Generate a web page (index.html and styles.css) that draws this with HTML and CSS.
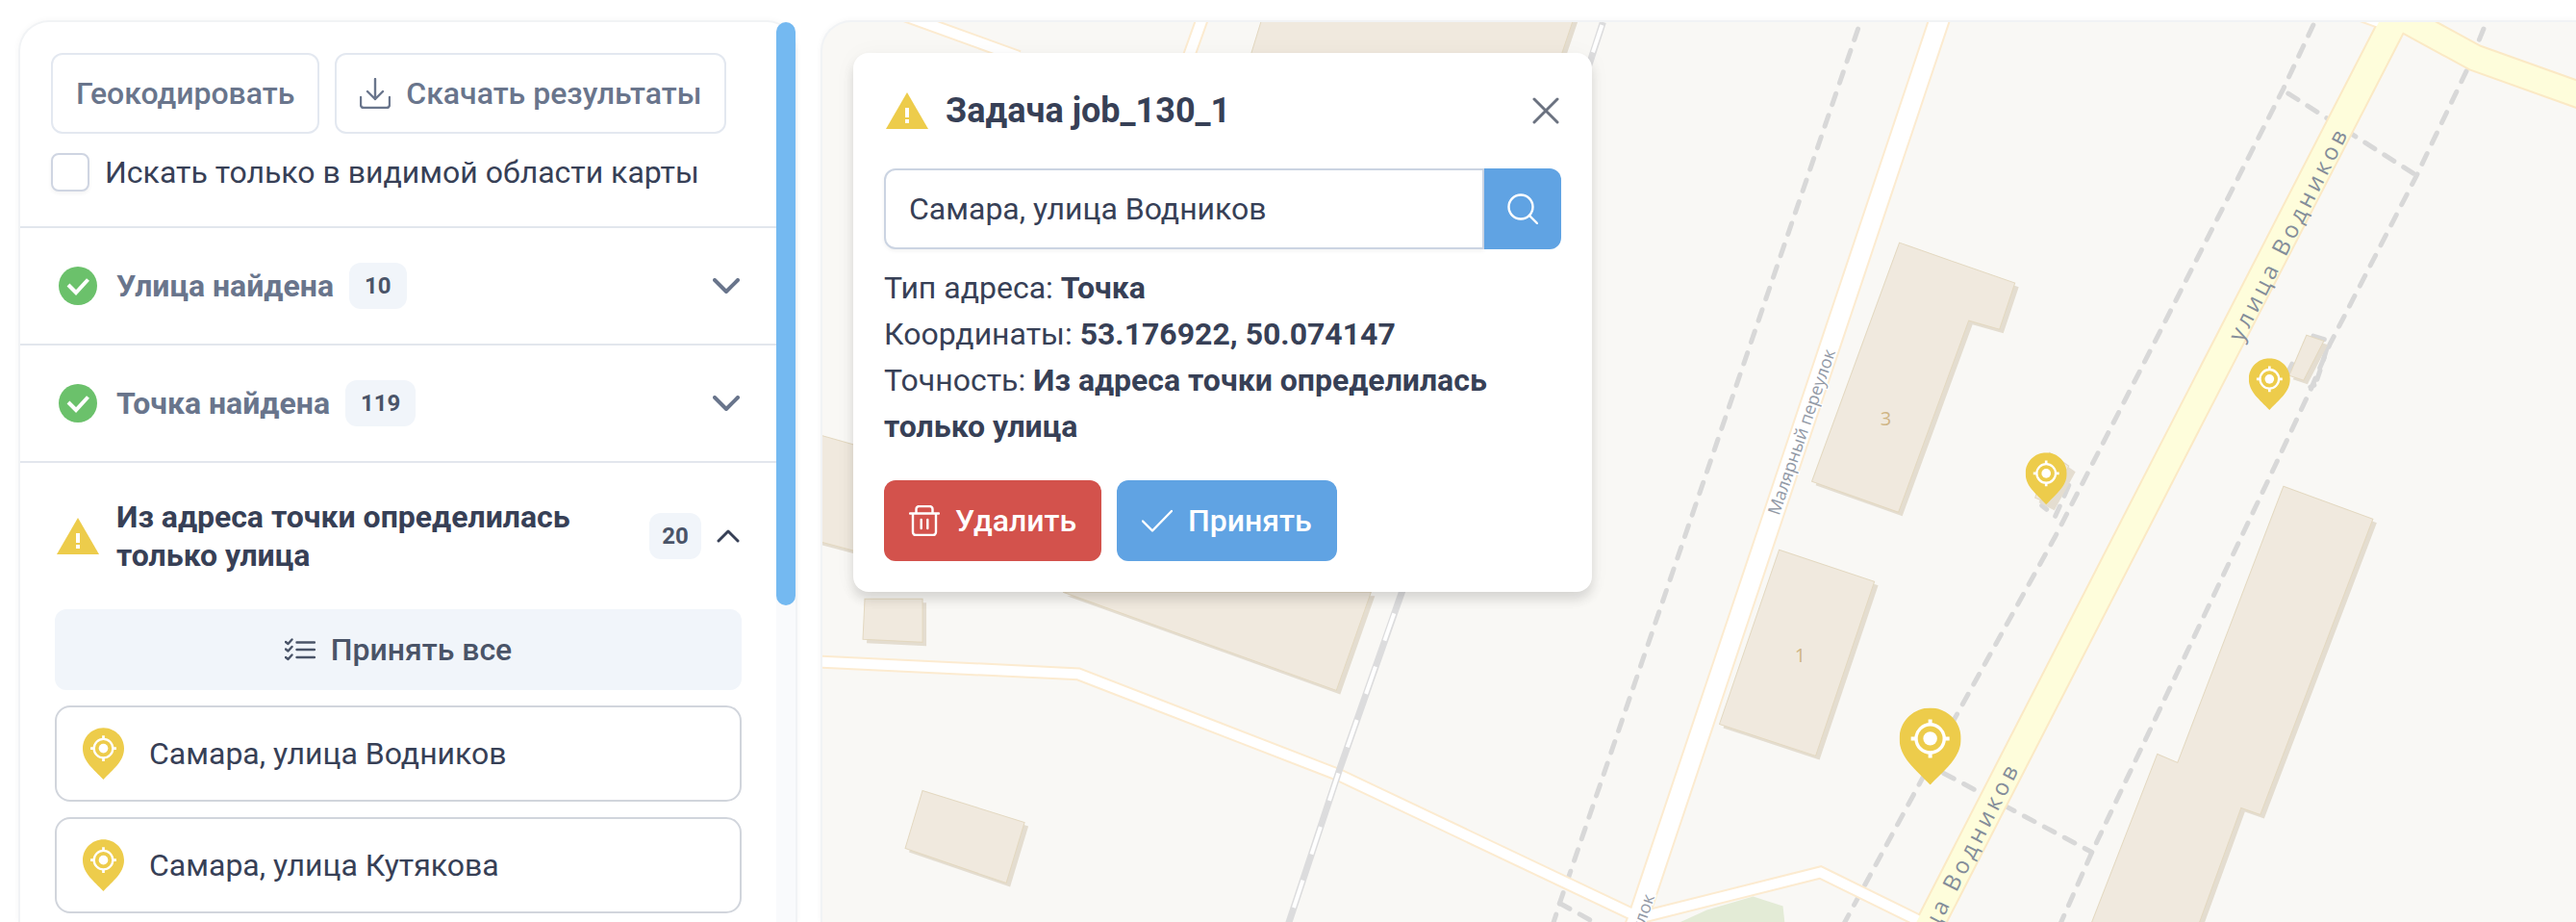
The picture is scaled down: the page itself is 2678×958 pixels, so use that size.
FILE: index.html
```html
<!DOCTYPE html>
<html lang="ru">
<head>
  <meta charset="UTF-8" />
  <title>Геокодирование</title>
  <link rel="stylesheet" href="styles.css">
</head>
<body>

  <!-- Общие иконки -->
  <svg class="sprite" aria-hidden="true">
    <symbol id="pin" viewBox="0 0 64 80">
      <path fill="#edcc4b" d="M32 0C14.300 0 0 14.300 0 32c0 20 17 32 32 48 15-16 32-28 32-48C64 14.300 49.700 0 32 0z" />
      <g fill="none" stroke="#fff">
        <circle cx="32" cy="32" r="14.600" stroke-width="3.400" />
        <path stroke-width="4" d="M32 12v5M32 47v5M12 32h5M47 32h5" />
      </g>
      <circle cx="32" cy="32" r="7.200" fill="#fff" />
    </symbol>
    <symbol id="warning" viewBox="0 0 44 38">
      <path fill="#edcc4b" d="M22 0l22 38H0z" />
      <path fill="#fff" d="M20 16h4v10h-4zM20 28h4v4h-4z" />
    </symbol>
    <symbol id="success" viewBox="0 0 40 40">
      <circle cx="20" cy="20" r="20" fill="#6bc16b" />
      <path fill="none" stroke="#fff" stroke-width="4" d="M10 19l8 8 12.500-13.500" />
    </symbol>
  </svg>

  <aside class="panel sidebar">
    <div class="sidebar-content">
      <div class="toolbar">
        <div class="row">
          <button type="button" class="btn btn-outline">Геокодировать</button>
          <button type="button" class="btn btn-outline">
            <svg class="icon" viewBox="0 0 32 32"><path d="M16 1v21M8 14l8 8 8-8M1 20v8a3 3 0 0 0 3 3h24a3 3 0 0 0 3-3v-8" /></svg>
            Скачать результаты
          </button>
        </div>
        <label class="check" for="visibleOnly">
          <input type="checkbox" id="visibleOnly" />
          Искать только в видимой области карты
        </label>
      </div>

      <button type="button" class="group" aria-expanded="false">
        <svg class="status"><use href="#success" /></svg>
        <span>Улица найдена</span>
        <span class="badge">10</span>
        <svg class="chevron" viewBox="0 0 28 16"><path d="M2 2l12 12L26 2" /></svg>
      </button>

      <button type="button" class="group" aria-expanded="false">
        <svg class="status"><use href="#success" /></svg>
        <span>Точка найдена</span>
        <span class="badge">119</span>
        <svg class="chevron" viewBox="0 0 28 16"><path d="M2 2l12 12L26 2" /></svg>
      </button>

      <button type="button" class="group open" aria-expanded="true">
        <svg class="status"><use href="#warning" /></svg>
        <span class="group-title">Из адреса точки определилась только улица</span>
        <span class="badge">20</span>
        <svg class="chevron" viewBox="0 0 24 14"><path d="M2 12L12 2l10 10" /></svg>
      </button>

      <div class="group-body">
        <button type="button" class="btn btn-muted">
          <svg class="icon list-icon" viewBox="0 0 32 24"><path d="M12.500 4.500H31M12.500 12H31M12.500 20H31M1 4l2.500 2L7.500 1.500M1 11.500l2.500 2 4-4.500M1 20l2.500 2 4-4.500" /></svg>
          Принять все
        </button>
        <button type="button" class="address"><svg class="pin"><use href="#pin" /></svg>Самара, улица Водников</button>
        <button type="button" class="address"><svg class="pin"><use href="#pin" /></svg>Самара, улица Кутякова</button>
      </div>
    </div>
    <div class="scrollbar"><div class="thumb"></div></div>
  </aside>

  <main class="panel map">
    <svg class="map-canvas" viewBox="856 23 1822 935" preserveAspectRatio="xMinYMin slice" aria-label="Карта">
      <path fill="#e3ebd6" d="M1742 960l33-15 48-14 31 10 2 19z" />

      <!-- Пешеходные дорожки -->
      <g class="footpath">
        <path d="M1932 30L1622 938l-7 22" />
        <path d="M1622 938l40 22" />
        <path d="M2405 26l-31 66-126 248-111 217-105 190-115 213" />
        <path d="M2379 97l133 85" />
        <path d="M2582 30l-17 42-53 111-90 175-19 45-36 77-133 281-59 124-33 75" />
        <path d="M2021 803l154 82" />
        <path d="M2405 349l13 4M2419 362l-6 20-4 12M2383 378l-5 10M2402 402l4-2" />
        <path d="M2151 504l-6 14-8 18M2123 525l5 4" />
      </g>

      <!-- Здания: сначала тень, потом контур -->
      <g id="buildings">
        <g class="building-shade" transform="translate(4 4)">
          <path d="M1314 15h324l-22 65h-322z" />
          <path d="M1106 615l284 102 36-102z" />
          <path d="M840 448l60 17v110l-60-16z" />
          <path d="M900 622h60v45l-62-3z" />
          <path d="M960 821l106 33-19 63-105-36z" />
          <path d="M1975 252l120 42-16 48-32-9-73 199-90-32z" />
          <path d="M1850 571l99 33-61 181-100-33z" />
          <path d="M2374 505l93 34-117 307-20-7-44 121h-112l69-177 21 9z" />
          <path d="M2398 348l18 6-21 41-15-5z" />
          <path d="M2131 470l23 16-22 40-16-8z" />
        </g>
        <g class="building">
          <path d="M1314 15h324l-22 65h-322z" />
          <path d="M1106 615l284 102 36-102z" />
          <path d="M840 448l60 17v110l-60-16z" />
          <path d="M900 622h60v45l-62-3z" />
          <path d="M960 821l106 33-19 63-105-36z" />
          <path d="M1975 252l120 42-16 48-32-9-73 199-90-32z" />
          <path d="M1850 571l99 33-61 181-100-33z" />
          <path d="M2374 505l93 34-117 307-20-7-44 121h-112l69-177 21 9z" />
          <path d="M2398 348l18 6-21 41-15-5z" />
          <path d="M2131 470l20 14-22 38-13-5z" />
        </g>
      </g>

      <!-- Дороги: обводка и заливка -->
      <g class="road-case">
        <path stroke-width="14" d="M850 687l272 13 271 105 312 148 188-47 110 54M930 12l130 47M1254 10l-25 70M2430 7l60 22" />
        <path stroke-width="23" d="M2020 10L1703 955l-8 20" />
        <path class="yellow-case" stroke-width="31" d="M2000 973L2253 480 2496 8" />
        <path class="yellow-case" stroke-width="29" d="M2485 12l88 48 115 41" />
      </g>
      <g class="road">
        <path stroke-width="10" d="M850 687l272 13 271 105 312 148 188-47 110 54M930 12l130 47M1254 10l-25 70M2430 7l60 22" />
        <path stroke-width="19" d="M2020 10L1703 955l-8 20" />
        <path class="yellow" stroke-width="27" d="M2000 973L2253 480 2496 8" />
        <path class="yellow" stroke-width="25" d="M2485 12l88 48 115 41" />
      </g>

      <!-- Железная дорога -->
      <path class="rail" d="M1667 23l-13 40-196 552-65 185-55 166" />
      <path class="rail-gap" d="M1666 26l-14 42" stroke-dasharray="30 60" />
      <path class="rail-gap" d="M1450 637l-57 163-55 166" stroke-dasharray="30 28.600" />

      <g class="street">
        <text transform="translate(2331 356) rotate(-63)">улица Водников</text>
        <text transform="translate(1989 1016) rotate(-63)">улица Водников</text>
      </g>
      <g class="lane">
        <text transform="translate(1850 536) rotate(-71)">Малярный переулок</text>
        <text transform="translate(1662 1102) rotate(-71)">Малярный переулок</text>
      </g>
      <text class="house" x="1961" y="442">3</text>
      <text class="house" x="1872" y="688">1</text>

      <use href="#pin" x="2338" y="372" width="43" height="54" />
      <use href="#pin" x="2106" y="470" width="43" height="54" />
      <use href="#pin" x="1975" y="735" width="64" height="80" />
    </svg>

    <section class="popup">
      <header class="popup-header">
        <svg class="status"><use href="#warning" /></svg>
        <h2>Задача job_130_1</h2>
        <button type="button" class="close" aria-label="Закрыть">
          <svg viewBox="0 0 28 28"><path d="M2 2l24 24M26 2L2 26" /></svg>
        </button>
      </header>

      <form class="search" onsubmit="event.preventDefault();">
        <input type="text" aria-label="Адрес" value="Самара, улица Водников" />
        <button type="submit" aria-label="Найти">
          <svg class="icon" viewBox="0 0 32 32"><circle cx="14" cy="14" r="12.500" /><path d="M23 23l8 8" /></svg>
        </button>
      </form>

      <div class="details">
        <div>Тип адреса: <strong>Точка</strong></div>
        <div>Координаты: <strong>53.176922, 50.074147</strong></div>
        <div>Точность: <strong>Из адреса точки определилась только улица</strong></div>
      </div>

      <div class="row">
        <button type="button" class="btn btn-danger">
          <svg class="icon" viewBox="0 0 32 32"><path d="M1 8.500h30M7.500 8V4a3 3 0 0 1 3-3h11a3 3 0 0 1 3 3v4M4 9v19a3 3 0 0 0 3 3h18a3 3 0 0 0 3-3V9M12.700 15v9M19.300 15v9" /></svg>
          Удалить
        </button>
        <button type="button" class="btn btn-primary">
          <svg class="icon" viewBox="0 0 32 32"><path d="M1 16.500l10 10L31 6" /></svg>
          Принять
        </button>
      </div>
    </section>
  </main>

</body>
</html>
```
FILE: styles.css
```css
* {
  box-sizing: border-box;
}
body {
  margin: 0;
  padding: 21px 0 0 19px;
  height: 100vh;
  overflow: hidden;
  display: flex;
  gap: 24px;
  background: #fff;
  color: #374056;
  font-family: Roboto, "Liberation Sans", sans-serif;
  font-size: 32px;
}
button, input {
  font: inherit;
  color: inherit;
}
button {
  cursor: pointer;
}
.sprite {
  position: absolute;
  width: 0;
  height: 0;
}

/* Панели */
.panel {
  border: 2px solid #f1f3f5;
  border-bottom: none;
  border-radius: 32px 32px 0 0;
  box-shadow: 0 0 6px rgba(0, 0, 0, 0.04);
}
.sidebar {
  flex: 0 0 810px;
  display: flex;
}
.sidebar-content {
  flex: 1;
  overflow: hidden;
  border-top-left-radius: 30px;
}
.scrollbar {
  width: 20px;
  background: #f9fafc;
  border-radius: 10px 10px 0 0;
}
.thumb {
  height: 64.8%;
  border-radius: 10px;
  background: #74b9f1;
}

/* Кнопки */
.row {
  display: flex;
  gap: 16px;
}
.btn {
  display: flex;
  align-items: center;
  justify-content: center;
  gap: 16px;
  height: 84px;
  padding: 0 24px;
  border: 2px solid transparent;
  border-radius: 12px;
  font-weight: 500;
  white-space: nowrap;
}
.btn-outline {
  background: #fff;
  border-color: #e3e8f0;
  color: #69758c;
}
.btn-muted {
  background: #f1f5fa;
  color: #4a5468;
}
.btn-danger {
  background: #d3524c;
  color: #fff;
}
.btn-primary {
  background: #60a3e3;
  color: #fff;
}
.icon {
  width: 32px;
  height: 32px;
  fill: none;
  stroke: currentColor;
  stroke-width: 2.4;
  stroke-linecap: round;
  stroke-linejoin: round;
}
.list-icon {
  height: 24px;
}

/* Верх боковой панели */
.toolbar {
  display: flex;
  flex-direction: column;
  gap: 20px;
  padding: 32px 32px 36px;
}
.check {
  display: flex;
  align-items: center;
  gap: 16px;
  height: 40px;
}
.check input {
  appearance: none;
  width: 40px;
  height: 40px;
  margin: 0;
  border: 2px solid #cfd5e2;
  border-radius: 8px;
  background: #fff;
  box-shadow: 0 2px 4px rgba(18, 18, 23, 0.05);
}

/* Группы результатов */
.group {
  display: flex;
  align-items: center;
  gap: 16px;
  width: 100%;
  min-height: 122px;
  padding: 36px 38px 36px 36px;
  border: none;
  border-top: 2px solid #e2e6ed;
  background: #fff;
  color: #69758c;
  font-weight: 700;
  line-height: 40px;
  text-align: left;
}
.group.open {
  color: #374056;
}
.group-title {
  flex: 1;
}
.status {
  flex: none;
  width: 48px;
  height: 40px;
}
.open .status,
.popup-header .status {
  height: 38px;
}
.badge {
  min-width: 54px;
  height: 48px;
  padding: 0 16px;
  border-radius: 12px;
  background: #f1f5fa;
  color: #4a5468;
  font-size: 24px;
  line-height: 48px;
  text-align: center;
}
.open .badge {
  padding: 0 12px;
}
.chevron {
  flex: none;
  width: 28px;
  height: 16px;
  margin-left: auto;
  fill: none;
  stroke: currentColor;
  stroke-width: 4;
  stroke-linecap: round;
  stroke-linejoin: round;
}
.open .chevron {
  width: 24px;
  height: 14px;
  margin-left: 0;
  stroke-width: 3;
}
.group-body {
  display: flex;
  flex-direction: column;
  gap: 16px;
  padding: 0 36px;
}
.address {
  display: flex;
  align-items: center;
  gap: 26px;
  height: 100px;
  padding: 0 27px;
  border: 2px solid #d1d5dc;
  border-radius: 16px;
  background: #fff;
  text-align: left;
}
.pin {
  width: 43px;
  height: 54px;
}

/* Карта */
.map {
  flex: 1;
  position: relative;
  overflow: hidden;
  border-right: none;
  border-top-right-radius: 0;
  background: #f9f8f5;
}
.map-canvas {
  position: absolute;
  inset: 0;
  width: 100%;
  height: 100%;
}
.footpath {
  fill: none;
  stroke: #d8d8d8;
  stroke-width: 5;
  stroke-linecap: round;
  stroke-dasharray: 12 11.7;
}
.building {
  fill: #f0e9de;
  stroke: #e3d8c0;
}
.building-shade {
  fill: #e4ddd0;
}
.road-case {
  fill: none;
  stroke: #fcebd0;
}
.road {
  fill: none;
  stroke: #fff;
}
.yellow-case {
  stroke: #fbe9c5;
}
.yellow {
  stroke: #fefddb;
}
.rail {
  fill: none;
  stroke: #dcdcdd;
  stroke-width: 7;
}
.rail-gap {
  fill: none;
  stroke: #fff;
  stroke-width: 4;
}
.street,
.lane,
.house {
  font-family: "Open Sans", sans-serif;
}
.street {
  fill: #848d9a;
  font-size: 24px;
  letter-spacing: 4px;
}
.lane {
  fill: #9299a6;
  stroke: #fff;
  stroke-width: 3;
  paint-order: stroke;
  font-size: 18px;
}
.house {
  fill: #cfb585;
  font-size: 20px;
  text-anchor: middle;
}

/* Карточка задачи */
.popup {
  position: relative;
  width: 768px;
  margin: 32px;
  padding: 32px;
  border-radius: 16px;
  background: #fff;
  box-shadow: 0 8px 12px rgba(0, 0, 0, 0.12), 0 2px 24px rgba(0, 0, 0, 0.04);
}
.popup-header {
  display: flex;
  align-items: center;
  gap: 16px;
  height: 56px;
  margin-bottom: 32px;
}
h2 {
  flex: 1;
  margin: 0;
  font-size: 36px;
  font-weight: 700;
}
.close {
  display: flex;
  padding: 2px;
  border: none;
  background: none;
  color: #6b7280;
}
.close svg {
  width: 28px;
  height: 28px;
  stroke: currentColor;
  stroke-width: 3;
  stroke-linecap: round;
}
.search {
  display: flex;
  height: 84px;
}
.search input {
  flex: 1;
  padding: 0 24px;
  border: 2px solid #cbd4e2;
  border-radius: 12px 0 0 12px;
  background: #fff;
  box-shadow: 0 2px 4px rgba(18, 18, 23, 0.05);
}
.search button {
  display: flex;
  align-items: center;
  justify-content: center;
  width: 80px;
  padding: 0;
  border: none;
  border-radius: 0 12px 12px 0;
  background: #60a3e3;
  color: #fff;
}
.details {
  margin: 16px 0 32px;
  line-height: 48px;
}
```
